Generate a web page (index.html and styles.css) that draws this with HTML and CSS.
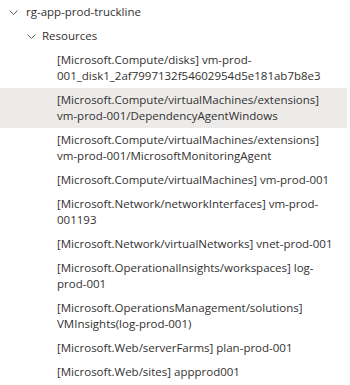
FILE: index.html
```html
<!DOCTYPE html>
<html lang="en">
<head>
    <meta charset="UTF-8">
    <title>Resource tree</title>
    <link rel="stylesheet" href="styles.css">
</head>
<body>
    <div class="tree">
        <div class="row group">
            <svg class="chevron" width="9" height="5" viewBox="0 0 9 5"><path d="M0.5 0.5 L4.5 4.5 L8.5 0.5" /></svg>
            <span>rg-app-prod-truckline</span>
        </div>
        <div class="row folder">
            <svg class="chevron" width="9" height="5" viewBox="0 0 9 5"><path d="M0.5 0.5 L4.5 4.5 L8.5 0.5" /></svg>
            <span>Resources</span>
        </div>
        <div class="row item">[Microsoft.Compute/disks] vm-prod-001_disk1_2af7997132f54602954d5e181ab7b8e3</div>
        <div class="row item selected">[Microsoft.Compute/virtualMachines/extensions] vm-prod-001/DependencyAgentWindows</div>
        <div class="row item">[Microsoft.Compute/virtualMachines/extensions] vm-prod-001/MicrosoftMonitoringAgent</div>
        <div class="row item">[Microsoft.Compute/virtualMachines] vm-prod-001</div>
        <div class="row item">[Microsoft.Network/networkInterfaces] vm-prod-001193</div>
        <div class="row item">[Microsoft.Network/virtualNetworks] vnet-prod-001</div>
        <div class="row item">[Microsoft.OperationalInsights/workspaces] log-prod-001</div>
        <div class="row item">[Microsoft.OperationsManagement/solutions] VMInsights(log-prod-001)</div>
        <div class="row item">[Microsoft.Web/serverFarms] plan-prod-001</div>
        <div class="row item">[Microsoft.Web/sites] appprod001</div>
    </div>
</body>
</html>
```

FILE: styles.css
```css
html, body {
    padding:0px;
    margin:0px;
    background: white;
    font-family: "Open Sans", "Noto Sans", sans-serif;
    font-size: 11.5px;
    color: #323130;
}

.tree {
    width:347px;
}

.row {
    display:flex;
    align-items:center;
    line-height:16px;
    padding-top:4px;
    padding-bottom:4px;
}

.chevron {
    flex:none;
    fill:none;
    stroke:#605e5c;
    stroke-width:1;
}

.group {
    padding-left:9px;
}

.group .chevron {
    margin-right:8px;
}

.folder {
    padding-left:27px;
}

.folder .chevron {
    margin-right:6px;
}

.item {
    display:block;
    padding-left:57px;
    padding-right:7px;
}

.selected {
    background:#edebe9;
}
```
